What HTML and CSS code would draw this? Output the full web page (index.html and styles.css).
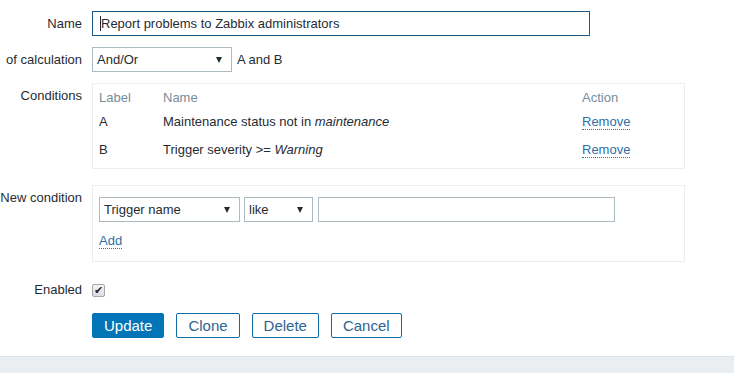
FILE: index.html
```html
<!DOCTYPE html>
<html>
<head>
<meta charset="utf-8">
<link rel="stylesheet" href="styles.css">
</head>
<body>
<main class="form">
  <div class="row row-mid">
    <div class="label">Name</div>
    <div class="field">
      <div class="input input-focus"><span class="caret"></span>Report problems to Zabbix administrators</div>
    </div>
  </div>
  <div class="row row-mid">
    <div class="label">of calculation</div>
    <div class="field inline">
      <div class="select w-calc"><span>And/Or</span><span class="arrow"></span></div>
      <span class="formula">A and B</span>
    </div>
  </div>
  <div class="row row-box row-cond">
    <div class="label">Conditions</div>
    <div class="field">
      <div class="box cond">
        <div class="ctable">
          <div class="th">Label</div><div class="th">Name</div><div class="th">Action</div>
          <div class="td">A</div><div class="td">Maintenance status not in <i>maintenance</i></div><div class="td"><a class="link">Remove</a></div>
          <div class="td">B</div><div class="td">Trigger severity &gt;= <i>Warning</i></div><div class="td"><a class="link">Remove</a></div>
        </div>
      </div>
    </div>
  </div>
  <div class="row row-box row-new">
    <div class="label">New condition</div>
    <div class="field">
      <div class="box newcond">
        <div class="inline tight">
          <div class="select w-trig"><span>Trigger name</span><span class="arrow"></span></div>
          <div class="select w-like"><span>like</span><span class="arrow"></span></div>
          <div class="input w-value"></div>
        </div>
        <div class="addline"><a class="link">Add</a></div>
      </div>
    </div>
  </div>
  <div class="row row-mid row-enabled">
    <div class="label">Enabled</div>
    <div class="field"><span class="check">&#10004;</span></div>
  </div>
  <div class="row row-mid row-buttons">
    <div class="label"></div>
    <div class="field buttons">
      <button class="btn btn-primary">Update</button>
      <button class="btn">Clone</button>
      <button class="btn">Delete</button>
      <button class="btn">Cancel</button>
    </div>
  </div>
</main>
<footer class="footer"></footer>
</body>
</html>
```

FILE: styles.css
```css
* { box-sizing: border-box; }
html, body { margin: 0; padding: 0; }
body {
  width: 734px;
  height: 373px;
  overflow: hidden;
  display: flex;
  flex-direction: column;
  background: #ffffff;
  font-family: "Liberation Sans", Arial, sans-serif;
  font-size: 13px;
  color: #1f2c33;
}
.form {
  padding-top: 11px;
  padding-bottom: 18px;
}
.row {
  display: grid;
  grid-template-columns: 82px 1fr;
  column-gap: 10px;
  margin-bottom: 11px;
}
.row-mid { align-items: center; min-height: 25px; }
.row-box { align-items: start; margin-bottom: 15px; }
.row-cond { margin-bottom: 16px; }
.row-new { margin-bottom: 15px; }
.row-enabled { margin-bottom: 11px; }
.row-buttons { margin-bottom: 0; }
.label {
  display: flex;
  justify-content: flex-end;
  white-space: nowrap;
  line-height: 16px;
}
.row-box .label { padding-top: 5px; }
.field { min-width: 0; }
.inline { display: flex; align-items: center; gap: 5px; }
.tight { gap: 4px; }
.input {
  height: 25px;
  border: 1px solid #acbbc2;
  background: #fff;
  line-height: 23px;
  padding: 0 6px;
  white-space: nowrap;
  display: flex;
  align-items: center;
}
.input-focus {
  width: 498px;
  border-color: #1d5985;
  padding-left: 7px;
}
.caret {
  display: inline-block;
  width: 1px;
  height: 15px;
  background: #1f2c33;
}
.select {
  height: 25px;
  border: 1px solid #acbbc2;
  background: #fff;
  display: flex;
  align-items: center;
  justify-content: space-between;
  padding: 0 9px 0 4px;
  white-space: nowrap;
}
.arrow {
  width: 0; height: 0;
  border-left: 3.5px solid transparent;
  border-right: 3.5px solid transparent;
  border-top: 6px solid #1f2c33;
}
.w-calc { width: 140px; }
.w-trig { width: 141px; }
.w-like { width: 69px; }
.w-value { width: 297px; margin-left: 1px; }
.box {
  width: 593px;
  border: 1px solid #ebeef0;
  background: #fff;
}
.cond { padding: 4px 6px 4px 6px; }
.ctable {
  display: grid;
  grid-template-columns: 64px 1fr 96px;
}
.th {
  color: #768d99;
  height: 20px;
  line-height: 20px;
}
.td {
  height: 28px;
  line-height: 28px;
  white-space: nowrap;
}
.link {
  color: #2f6ea7;
  border-bottom: 1px dotted #2f6ea7;
  line-height: 14px;
  display: inline-block;
}
.newcond { padding: 11px 6px 12px 6px; }
.addline { margin-top: 11px; line-height: 16px; height: 16px; }
.check {
  display: inline-flex;
  align-items: center;
  justify-content: center;
  width: 13px;
  height: 13px;
  border: 1px solid #a6a6a6;
  border-radius: 2px;
  background: linear-gradient(#f4f4f4, #dcdcdc);
  color: #2a2a2a;
  font-size: 11px;
  font-weight: bold;
  line-height: 1;
  font-family: "DejaVu Sans", sans-serif;
  margin-top: 1px;
}
.buttons { display: flex; gap: 12px; }
.btn {
  height: 25px;
  padding: 0 11px;
  border: 1px solid #0f6aa6;
  border-radius: 2px;
  background: #fff;
  color: #2d6491;
  font-family: "Liberation Sans", Arial, sans-serif;
  font-size: 15px;
  line-height: 23px;
  cursor: pointer;
}
.btn-primary {
  background: #0275b8;
  border-color: #0275b8;
  color: #fff;
}
.footer {
  flex: 1;
  background: #ebeef0;
  border-top: 1px solid #e0e4e6;
}
```
